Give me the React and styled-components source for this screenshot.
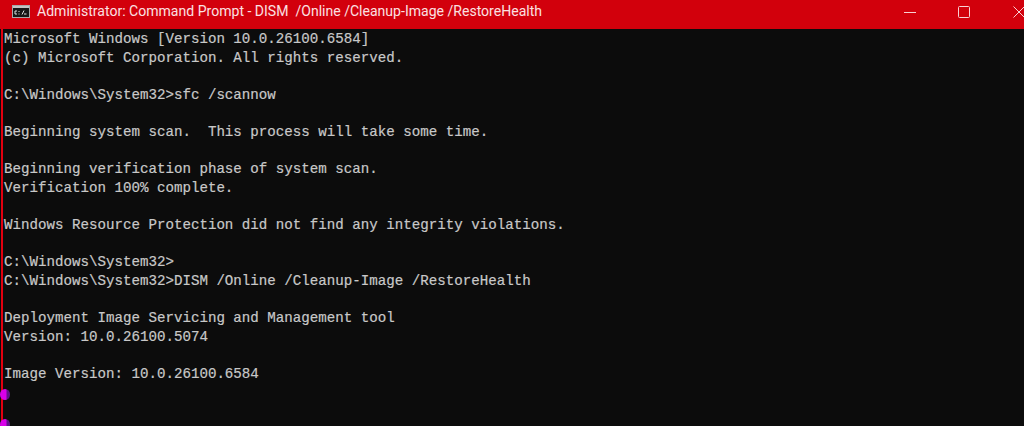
import React from "react";
import styled, { createGlobalStyle } from "styled-components";

const Global = createGlobalStyle`
  html, body { margin: 0; padding: 0; background: #0c0c0c; }
  #root { width: 1024px; height: 426px; overflow: hidden; }
`;
const Window = styled.div`
  position: relative;
  width: 1024px; height: 426px;
  display: flex; flex-direction: column;
  background: #0c0c0c;
  overflow: hidden;
`;
const TitleBar = styled.div`
  height: 23px; flex: none;
  padding: 0 0 5.5px 12px;
  background: #d2000c;
  display: flex; align-items: center;
  color: #fbe0e2;
  font: 14.05px/23px "Roboto", "Open Sans", sans-serif;
`;
const AppIcon = styled.svg`
  width: 18px; height: 13px; flex: none; margin-right: 7px;
`;
const Title = styled.div`
  flex: 1; white-space: pre;
`;
const Controls = styled.div`
  display: flex; align-items: center; flex: none;
`;
const Control = styled.svg`
  width: 12px; height: 12px; flex: none; margin-left: ${p => p.$gap}px;
  margin-right: ${p => p.$end || 0}px;
  color: #f9d0d3;
`;
const Body = styled.div`
  flex: 1;
  display: flex;
  border-left: 2px solid #e3000f;
  margin-left: 1px;
  background: #0c0c0c;
`;
const Console = styled.pre`
  margin: 0; padding: 1.5px 0 0 1px;
  color: #c8c8c8;
  font: 14.17px/18.6px "Liberation Mono", "DejaVu Sans Mono", monospace;
  -webkit-text-stroke: 0.2px #c8c8c8;
`;
const Pin = styled.div`
  position: absolute; left: 0; top: ${p => p.$top}px;
  width: 10px; height: 11px;
  border-radius: 50%;
  background: linear-gradient(90deg, #d800ea 55%, #5e1288 75%);
`;

const text = String.raw`Microsoft Windows [Version 10.0.26100.6584]
(c) Microsoft Corporation. All rights reserved.

C:\Windows\System32>sfc /scannow

Beginning system scan.  This process will take some time.

Beginning verification phase of system scan.
Verification 100% complete.

Windows Resource Protection did not find any integrity violations.

C:\Windows\System32>
C:\Windows\System32>DISM /Online /Cleanup-Image /RestoreHealth

Deployment Image Servicing and Management tool
Version: 10.0.26100.5074

Image Version: 10.0.26100.6584`;

export default function App() {
  return (
    <Window>
      <Global />
      <TitleBar>
        <AppIcon viewBox="0 0 18 13">
          <rect x="0.5" y="0.5" width="17" height="12" fill="#161616" stroke="#a8a8a8" />
          <rect x="1" y="1" width="16" height="2" fill="#c4c4c4" />
          <path d="M3 6h2M3 6v3h2M7 6v1M7 8.5v1M10 9.5l2-4M12 9h2.5" stroke="#e0e0e0" fill="none" />
        </AppIcon>
        <Title>Administrator: Command Prompt - DISM  /Online /Cleanup-Image /RestoreHealth</Title>
        <Controls>
          <Control $gap={0} viewBox="0 0 12 12"><path d="M0 6.5h12" stroke="currentColor" /></Control>
          <Control $gap={42} viewBox="0 0 12 12"><rect x="0.5" y="0.5" width="11" height="11" rx="1" fill="none" stroke="currentColor" /></Control>
          <Control $gap={43} $end={-1} viewBox="0 0 12 12"><path d="M0.5 0.5l11 11M11.5 0.5l-11 11" stroke="currentColor" /></Control>
        </Controls>
      </TitleBar>
      <Body>
        <Console>{text}</Console>
      </Body>
      <Pin $top={389} />
      <Pin $top={419} />
    </Window>
  );
}
